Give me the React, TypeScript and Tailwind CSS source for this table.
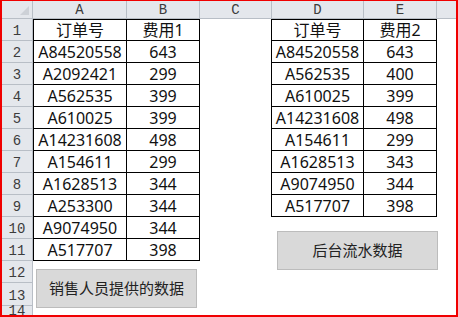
import React from "react";

const left: [string, string][] = [
  ["订单号", "费用1"],
  ["A84520558", "643"],
  ["A2092421", "299"],
  ["A562535", "399"],
  ["A610025", "399"],
  ["A14231608", "498"],
  ["A154611", "299"],
  ["A1628513", "344"],
  ["A253300", "344"],
  ["A9074950", "344"],
  ["A517707", "398"],
];

const right: [string, string][] = [
  ["订单号", "费用2"],
  ["A84520558", "643"],
  ["A562535", "400"],
  ["A610025", "399"],
  ["A14231608", "498"],
  ["A154611", "299"],
  ["A1628513", "343"],
  ["A9074950", "344"],
  ["A517707", "398"],
];

const rowHeights = [22, 22, 22, 22, 22, 22, 22, 22, 22, 22, 22, 22, 23, 22];

const hdrFont = "font-['Liberation_Mono',monospace] text-[14px] text-[#3c3c3c]";
const cellFont =
  "font-['Noto_Sans','Noto_Sans_CJK_SC',sans-serif] text-[16px] text-[#111]";

function Cell({
  w,
  text,
  cls,
}: {
  w: string;
  text?: string;
  cls: string;
}) {
  return (
    <div
      className={`${w} shrink-0 h-full flex items-center justify-center ${cellFont} ${cls}`}
    >
      {text}
    </div>
  );
}

export default function App() {
  return (
    <div className="relative w-[458px] h-[317px] overflow-hidden bg-white border-t border-l-2 border-r-2 border-b-2 border-[#f00000]">
      <div className="flex flex-col w-full">
        {/* column header */}
        <div className="flex h-[18px] shrink-0">
          <div className="w-[31px] shrink-0 h-full bg-[#e4e7ec] border-r border-b border-[#b8bec6] relative">
            <svg
              className="absolute right-[2px] bottom-[2px]"
              width="11"
              height="11"
              viewBox="0 0 11 11"
            >
              <polygon points="10,1 10,10 1,10" fill="#cdd1d7" />
            </svg>
          </div>
          {[
            ["w-[94px]", "A"],
            ["w-[73px]", "B"],
            ["w-[72px]", "C"],
            ["w-[92px]", "D"],
            ["w-[73px]", "E"],
            ["w-[40px]", ""],
          ].map(([w, l], i) => (
            <div
              key={i}
              className={`${w} shrink-0 h-full bg-[#e4e7ec] border-r border-b border-[#b8bec6] flex items-center justify-center pt-[2px] ${hdrFont}`}
            >
              {l}
            </div>
          ))}
        </div>
        {rowHeights.map((h, idx) => {
          const r = idx + 1;
          const inL = r <= 11;
          const inR = r <= 9;
          const topL = r === 1 ? "border-t" : "";
          const last = r === 14;
          return (
            <div
              key={r}
              className="flex shrink-0"
              style={{ height: h }}
            >
              <div
                className={`w-[31px] shrink-0 h-full bg-[#e4e7ec] border-r border-b border-[#b8bec6] flex justify-center ${
                  last ? "items-start pt-0 leading-[11px]" : "items-center pt-[4px]"
                } ${hdrFont}`}
              >
                {r}
              </div>
              <Cell
                w="w-[94px]"
                text={inL ? left[idx][0] : undefined}
                cls={inL ? `border-l border-r border-b border-black ${topL}` : ""}
              />
              <Cell
                w="w-[73px]"
                text={inL ? left[idx][1] : undefined}
                cls={inL ? `border-r border-b border-black ${topL}` : ""}
              />
              <Cell w="w-[71px]" cls="" />
              <Cell
                w="w-[93px]"
                text={inR ? right[idx][0] : undefined}
                cls={inR ? `border-l border-r border-b border-black ${topL}` : ""}
              />
              <Cell
                w="w-[73px]"
                text={inR ? right[idx][1] : undefined}
                cls={inR ? `border-r border-b border-black ${topL}` : ""}
              />
              <Cell w="w-[40px]" cls="" />
            </div>
          );
        })}
      </div>

      <div className="absolute left-[34px] top-[268px] w-[161px] h-[39px] bg-[#d9d9d9] border border-[#bcbcbc] flex items-center justify-center font-['Noto_Sans_CJK_SC',sans-serif] text-[15px] text-[#222]">
        销售人员提供的数据
      </div>
      <div className="absolute left-[275px] top-[230px] w-[161px] h-[39px] bg-[#d9d9d9] border border-[#bcbcbc] flex items-center justify-center font-['Noto_Sans_CJK_SC',sans-serif] text-[15px] text-[#222]">
        后台流水数据
      </div>
    </div>
  );
}
